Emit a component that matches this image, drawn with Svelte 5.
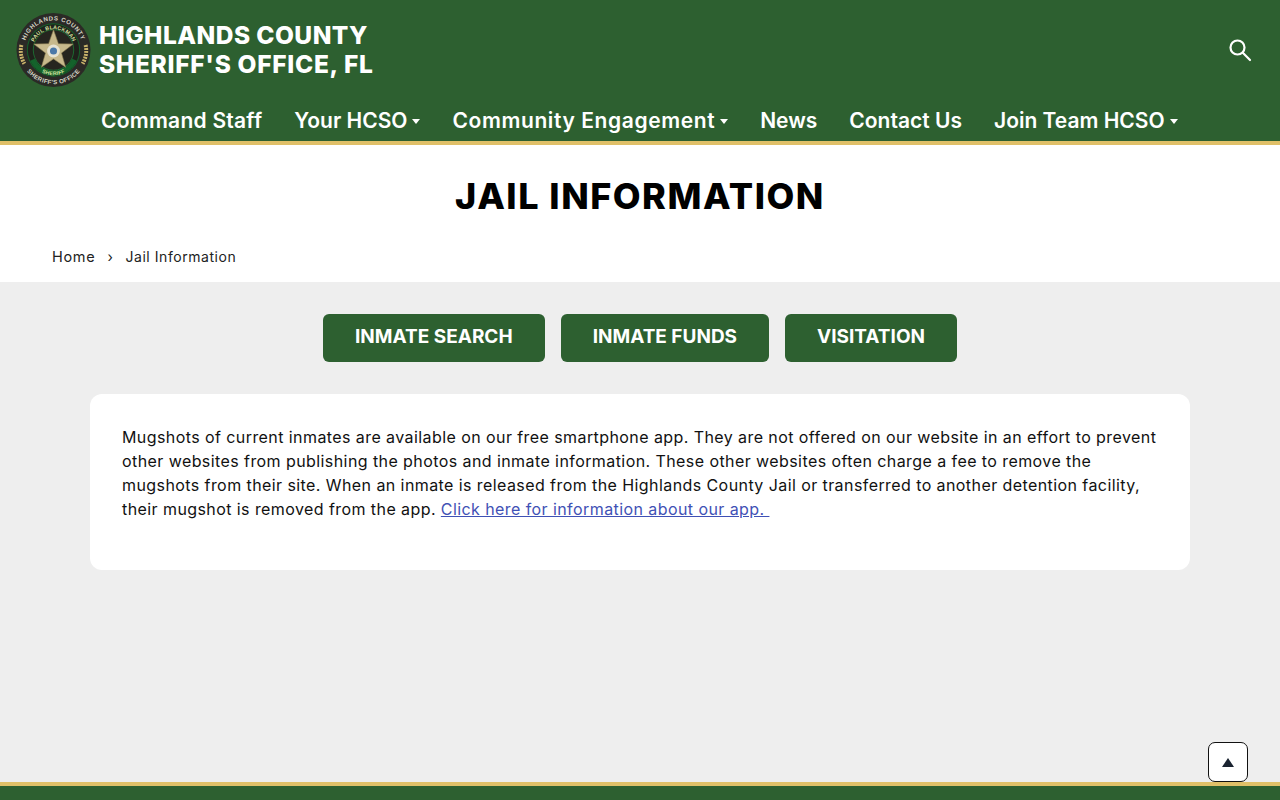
<script lang="ts">
  type NavItem = { label: string; caret?: boolean; spacing?: 'wide' | 'wider' };

  const nav: NavItem[] = [
    { label: 'Command Staff', spacing: 'wide' },
    { label: 'Your HCSO', caret: true },
    { label: 'Community Engagement', caret: true, spacing: 'wider' },
    { label: 'News' },
    { label: 'Contact Us' },
    { label: 'Join Team HCSO', caret: true }
  ];

  const actions = ['INMATE SEARCH', 'INMATE FUNDS', 'VISITATION'];
</script>

<div class="page">
  <header class="header">
    <div class="top">
      <a class="brand" href="#home">
        <svg class="seal" viewBox="0 0 76 76" aria-hidden="true">
          <defs>
            <path id="arcTop" d="M8.45 43.2A30 30 0 1 1 67.55 43.2" />
            <path id="arcBottom" d="M4 44A34.5 34.5 0 0 0 72 44" />
            <path id="arcName" d="M16.8 42A21.5 21.5 0 1 1 59.2 42" />
            <path id="arcSheriff" d="M12.9 43A25.6 25.6 0 0 0 63.1 43" />
          </defs>
          <circle cx="38" cy="38" r="37.5" fill="#2b2a26" />
          <circle cx="38" cy="38" r="27" fill="#14632b" />
          <circle cx="38" cy="38" r="26" fill="#1f211b" />
          <path d="M16.7 47.9A23.5 23.5 0 0 0 59.3 47.9" fill="none" stroke="#14632b" stroke-width="5" />
          <circle cx="38" cy="38" r="20.5" fill="#26251f" stroke="#1c7a35" stroke-width="0.8" />
          <path d="M5.5 33c-1.5 6-.5 13 3 19M70.5 33c1.5 6 .5 13-3 19" fill="none" stroke="#c9b26a" stroke-width="4" stroke-dasharray="2 1" />
          <text class="ring spread"><textPath href="#arcTop" startOffset="50%" text-anchor="middle">HIGHLANDS COUNTY</textPath></text>
          <text class="ring"><textPath href="#arcBottom" startOffset="50%" text-anchor="middle">SHERIFF'S OFFICE</textPath></text>
          <text class="inner"><textPath href="#arcName" startOffset="50%" text-anchor="middle">PAUL BLACKMAN</textPath></text>
          <text class="inner"><textPath href="#arcSheriff" startOffset="50%" text-anchor="middle">SHERIFF</textPath></text>
          <polygon points="38,17.5 43,31.6 58,32 46.1,41.1 50.3,55.5 38,47 25.7,55.5 29.9,41.1 18,32 33,31.6" fill="#c7b98c" stroke="#8a7c50" stroke-width="0.6" />
          <circle cx="38" cy="39" r="6.5" fill="#e6e3d3" />
          <circle cx="38" cy="39" r="3.6" fill="#4a78a8" />
        </svg>
        <span class="title">
          <span class="line1">HIGHLANDS COUNTY</span>
          <span class="line2">SHERIFF'S OFFICE, FL</span>
        </span>
      </a>
      <button class="search" type="button" aria-label="Search">
        <svg viewBox="0 0 24 24" width="24" height="24" aria-hidden="true">
          <circle cx="9.5" cy="9.5" r="7" fill="none" stroke="currentColor" stroke-width="2.2" />
          <path d="M14.8 14.8 22 22" fill="none" stroke="currentColor" stroke-width="2.2" stroke-linecap="round" />
        </svg>
      </button>
    </div>
    <nav class="nav" aria-label="Main">
      {#each nav as item}
        <a class="navItem {item.spacing ?? ''}" class:hasCaret={item.caret} href="#nav">
          {item.label}
          {#if item.caret}
            <span class="caret" aria-hidden="true"></span>
          {/if}
        </a>
      {/each}
    </nav>
  </header>

  <section class="intro">
    <h1>JAIL INFORMATION</h1>
    <div class="crumbs">
      <a href="#home">Home</a>
      <span class="sep" aria-hidden="true">›</span>
      <span class="current">Jail Information</span>
    </div>
  </section>

  <main class="main">
    <div class="actions">
      {#each actions as label}
        <a class="action" href="#action">{label}</a>
      {/each}
    </div>
    <div class="card">
      <p>
        Mugshots of current inmates are available on our free smartphone app. They are not offered on our website in an effort to prevent other websites from publishing the photos and inmate information. These other websites often charge a fee to remove the mugshots from their site. When an inmate is released from the Highlands County Jail or transferred to another detention facility, their mugshot is removed from the app.
        <a class="link" href="#app">Click here for information about our app.&nbsp;</a>
      </p>
    </div>
  </main>

  <footer class="footer"></footer>

  <button class="toTop" type="button" aria-label="Back to top">
    <span class="tri"></span>
  </button>
</div>

<style>
  :global(body) {
    margin: 0;
    background: #eeeeee;
    font-family: Inter, "Open Sans", "Liberation Sans", sans-serif;
    color: #000;
  }

  .page {
    min-height: 800px;
    display: flex;
    flex-direction: column;
  }

  .header {
    background: #2d6030;
    border-bottom: 4px solid #e0c068;
    color: #fff;
    height: 141px;
    display: flex;
    flex-direction: column;
  }

  .top {
    display: flex;
    align-items: center;
    justify-content: space-between;
    padding: 12px 28px 0 16px;
  }

  .brand {
    display: flex;
    align-items: center;
    gap: 8px;
    color: #fff;
    text-decoration: none;
  }

  .seal {
    width: 75px;
    height: 76px;
    display: block;
  }

  .ring {
    font-size: 6.2px;
    font-weight: 600;
    letter-spacing: 0.35px;
    fill: #d8d6c8;
    font-family: "Liberation Sans", sans-serif;
  }

  .ring.spread {
    letter-spacing: 0.6px;
  }

  .inner {
    font-size: 5.4px;
    font-weight: 600;
    letter-spacing: 0.2px;
    fill: #d6e2a0;
    font-family: "Liberation Sans", sans-serif;
  }

  .title {
    display: flex;
    flex-direction: column;
    font-size: 24.5px;
    font-weight: 800;
    line-height: 29px;
    white-space: nowrap;
  }

  .line1 {
    letter-spacing: 0.45px;
  }

  .line2 {
    letter-spacing: 0.7px;
  }

  .search {
    background: none;
    border: 0;
    padding: 0;
    color: #fff;
    display: flex;
  }

  .nav {
    display: flex;
    gap: 32px;
    padding: 17px 0 0 101px;
  }

  .navItem {
    color: #fff;
    text-decoration: none;
    font-size: 21px;
    font-weight: 600;
    line-height: 32px;
    display: flex;
    align-items: center;
    gap: 5px;
    white-space: nowrap;
  }

  .navItem.wide {
    letter-spacing: 0.25px;
  }

  .navItem.wider {
    letter-spacing: 0.6px;
  }

  .navItem.hasCaret {
    margin-top: -1px;
  }

  .caret {
    width: 0;
    height: 0;
    margin-top: 1px;
    border-left: 4px solid transparent;
    border-right: 4px solid transparent;
    border-top: 5px solid #fff;
  }

  .intro {
    background: #fff;
    height: 137px;
    display: flex;
    flex-direction: column;
  }

  h1 {
    margin: 29px 0 0;
    text-align: center;
    font-size: 36px;
    line-height: 44px;
    font-weight: 800;
    letter-spacing: 1.5px;
  }

  .crumbs {
    display: flex;
    align-items: center;
    gap: 10px;
    padding: 29px 0 0 52px;
    font-size: 14px;
    line-height: 18px;
    letter-spacing: 0.55px;
    color: #222;
  }

  .crumbs a {
    color: #222;
    text-decoration: none;
    margin-top: 1px;
    font-size: 14.5px;
    letter-spacing: 0.7px;
  }

  .sep {
    margin-top: 1px;
    width: 10px;
    text-align: center;
  }

  .main {
    flex: 1;
    padding: 32px 90px;
    display: flex;
    flex-direction: column;
    gap: 32px;
  }

  .actions {
    display: flex;
    justify-content: center;
    gap: 16px;
  }

  .action {
    background: #2d6030;
    color: #fff;
    text-decoration: none;
    font-size: 19px;
    font-weight: 700;
    line-height: 24px;
    padding: 11px 32px 13px;
    border-radius: 6px;
  }

  .card {
    background: #fff;
    border-radius: 12px;
    padding: 31px 32px 33px;
    height: 176px;
    box-sizing: border-box;
  }

  p {
    margin: 0;
    font-size: 16px;
    line-height: 24px;
    letter-spacing: 0.42px;
    color: #111;
  }

  .link {
    color: #3f51b5;
  }

  .footer {
    background: #2d6030;
    border-top: 4px solid #e0c068;
    height: 14px;
  }

  .toTop {
    position: fixed;
    right: 32px;
    bottom: 18px;
    width: 40px;
    height: 40px;
    background: #fff;
    border: 1px solid #111;
    border-radius: 7px;
    display: grid;
    place-items: center;
    padding: 0;
  }

  .tri {
    width: 0;
    height: 0;
    border-left: 6.5px solid transparent;
    border-right: 6.5px solid transparent;
    border-bottom: 9px solid #1a2330;
  }
</style>
